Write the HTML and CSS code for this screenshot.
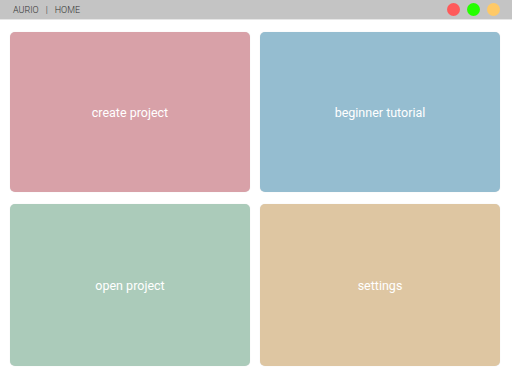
FILE: index.html
```html
<!DOCTYPE html>
<html lang="en">
<head>
    <meta charset="UTF-8">
    <meta name="viewport" content="width=device-width, initial-scale=1.0">
    <title>Aurio</title>
    <link rel="stylesheet" href="styles.css">
</head>
<body>

    <div class="titlebar">
        <div class="crumbs">
            <span>AURIO</span>
            <span class="sep">|</span>
            <span>HOME</span>
        </div>
        <div class="lights">
            <span class="light red"></span>
            <span class="light green"></span>
            <span class="light yellow"></span>
        </div>
    </div>

    <div class="menu">
        <div class="tile create">create project</div>
        <div class="tile tutorial">beginner tutorial</div>
        <div class="tile open">open project</div>
        <div class="tile settings">settings</div>
    </div>

</body>
</html>
```

FILE: styles.css
```css
body {
    font-family: Roboto, "Liberation Sans", sans-serif;
    background-color: #fff;
    margin: 0;
}

.titlebar {
    height: 20px;
    background-color: #c4c4c4;
    border-bottom: 1px solid #e6e6e6;
    display: flex;
    justify-content: space-between;
    align-items: center;
    padding: 0 12px 0 13px;
    box-sizing: border-box;
}

.crumbs {
    font-size: 9px;
    font-weight: 300;
    color: #333;
    display: flex;
    gap: 7px;
}

.lights {
    display: flex;
    gap: 7px;
}

.light {
    width: 13px;
    height: 13px;
    border-radius: 50%;
}

.light.red {
    background-color: #ff5a5a;
}

.light.green {
    background-color: #25ff00;
}

.light.yellow {
    background-color: #ffc966;
}

.menu {
    display: grid;
    grid-template-columns: 240px 240px;
    grid-template-rows: 160px 162px;
    column-gap: 10px;
    row-gap: 12px;
    padding: 12px 10px;
}

.tile {
    border-radius: 5px;
    display: flex;
    justify-content: center;
    align-items: center;
    color: #fff;
    font-size: 12.5px;
    box-shadow: 0 0 1px rgba(0, 0, 0, 0.15);
}

.create {
    background-color: #d8a1a8;
}

.tutorial {
    background-color: #95bdd0;
}

.open {
    background-color: #abcbba;
}

.settings {
    background-color: #dec6a2;
}
```
